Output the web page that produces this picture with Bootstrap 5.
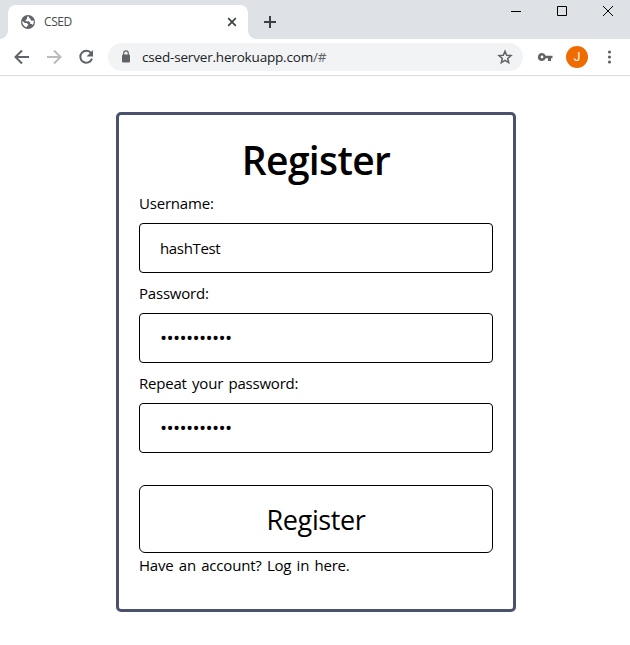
<!DOCTYPE html>
<html lang="en">
<head>
<meta charset="utf-8">
<meta name="viewport" content="width=device-width, initial-scale=1">
<title>CSED</title>
<link href="https://cdn.jsdelivr.net/npm/bootstrap@5.3.0/dist/css/bootstrap.min.css" rel="stylesheet">
<style>
body { font-family: "Segoe UI", "Open Sans", "Noto Sans", sans-serif; color: #000; background: #fff; height: 645px; overflow: hidden; }
.tab-strip { height: 39px; background: #dee1e6; padding-left: 8px; }
.browser-tab { width: 240px; height: 34px; margin-top: 5px; padding: 0 10px 0 12px; background: #fff; border-radius: 8px 8px 0 0; }
.browser-tab::before, .browser-tab::after { content: ""; position: absolute; bottom: 0; width: 8px; height: 8px; }
.browser-tab::before { left: -8px; background: radial-gradient(circle at 0 0, transparent 7.5px, #fff 8px); }
.browser-tab::after { right: -8px; background: radial-gradient(circle at 100% 0, transparent 7.5px, #fff 8px); }
.tab-title { font-size: 12px; line-height: 16px; color: #45494d; margin-left: 8px; letter-spacing: -.4px; }
.new-tab { margin: 16px 0 0 16px; }
.reload { margin-left: 14px; }
.toolbar { height: 37px; border-bottom: 1px solid #dadce0; padding: 0 12px 0 13px; }
.address { width: 415px; height: 28px; background: #f1f3f4; margin-left: 13px; padding: 0 10px; }
.url { font-size: 13.5px; line-height: 20px; color: #202124; margin-left: 8px; letter-spacing: -.18px; }
.url-rest { color: #5f6368; }
.key { margin-left: 14px; }
.avatar { width: 22px; height: 22px; background: #ef6c00; color: #fff; font: 12px/22px Roboto, sans-serif; margin-left: 12px; }
.page { padding: 36px 0 0 2px; }
.register-box { width: 400px; height: 500px; border: 3px solid #4a536b; border-radius: 5px; padding: 20px; }
.register-title { font-size: 39px; line-height: 46px; padding-top: 2px; font-weight: 600; letter-spacing: -.65px; }
.register-box .form-label, .login-link { font-size: 15px; line-height: 24px; letter-spacing: -.2px; word-spacing: 1.6px; }
.register-box .form-control { height: 50px; border: 1px solid #000; border-radius: 4px; padding: 0 20px; color: #000; font-size: 15px; letter-spacing: -.35px; }
.register-box .form-control.secret { font-size: 19px; letter-spacing: -.65px; }
.register-btn { height: 68px; margin-top: 32px; padding: 8px 0 6px; border: 1px solid #000; border-radius: 6px; color: #000; font-size: 27px; line-height: 42px; letter-spacing: -.4px; }
</style>
</head>
<body>
<header>
  <div class="tab-strip d-flex">
    <div class="browser-tab position-relative d-flex align-items-center">
      <svg width="16" height="16" viewBox="0 0 16 16"><circle cx="8" cy="8" r="7" fill="#5f6368"/><path d="M8.200 1.800 7 3.500v1.500L5.600 6v1.300h3.200l1.400 1.200v1.500h1.500l1 1c1.200-1.600 1.300-3.200.9-4.500l-2 .2-1.200-1V4.300H9.200L8.700 3zM2.300 6.900c-.4 2.700 1.700 5.900 4.700 6.200v-1.300h1.200v-1.300L6.800 9.100H5z" fill="#fff"/></svg>
      <span class="tab-title">CSED</span>
      <svg class="ms-auto" width="12" height="12" viewBox="0 0 12 12" stroke="#3c4043" stroke-width="1.700"><path d="m2.200 2.200 7.600 7.600M9.800 2.200 2.200 9.800"/></svg>
    </div>
    <svg class="new-tab" width="12" height="12" viewBox="0 0 12 12" stroke="#3c4043" stroke-width="2"><path d="M6 0v12M0 6h12"/></svg>
    <div class="ms-auto d-flex">
      <svg width="120" height="24" viewBox="0 0 120 24" fill="none" stroke="#000"><path d="M1 11.500h10M47.500 6.500h9v9h-9zM93 6l10 10M103 6 93 16"/></svg>
    </div>
  </div>
  <div class="toolbar d-flex align-items-center">
    <svg width="18" height="18" viewBox="0 0 18 18" fill="none" stroke="#5f6368" stroke-width="2"><path d="M16 9H3M9 2.500 2.500 9 9 15.500"/></svg>
    <svg class="ms-3" width="16" height="18" viewBox="0 0 16 18" fill="none" stroke="#babcbe" stroke-width="2"><path d="M0 9h13M7 2.500 13.500 9 7 15.500"/></svg>
    <svg class="reload" width="18" height="18" viewBox="0 0 18 18"><path d="M14.200 5.200A6 6 0 1 0 15 10.700" fill="none" stroke="#5f6368" stroke-width="2"/><path d="M16 2v6.500H9.500z" fill="#5f6368"/></svg>
    <div class="address rounded-pill d-flex align-items-center">
      <svg width="16" height="16" viewBox="0 0 16 16"><rect x="4" y="5.500" width="8" height="8" rx="1" fill="#5f6368"/><path d="M5.700 6V4.200a2.300 2.300 0 0 1 4.600 0V6" fill="none" stroke="#5f6368" stroke-width="1.200"/></svg>
      <span class="url">csed-server.herokuapp.com<span class="url-rest">/#</span></span>
      <svg class="ms-auto" width="16" height="16" viewBox="0 0 16 16" fill="none" stroke="#5f6368" stroke-width="1.500"><path d="m8 2.200 1.700 4 4.300.4-3.300 2.800 1 4.200L8 11.400l-3.700 2.200 1-4.200L2 6.600l4.300-.4z"/></svg>
    </div>
    <svg class="key" width="17" height="16" viewBox="0 0 17 16"><path fill="#5f6368" fill-rule="evenodd" d="M5 4a4 4 0 1 0 3.700 5.300H11V12h3V9.300h1.500V6.700H8.700A4 4 0 0 0 5 4zm0 2.600a1.400 1.400 0 1 1 0 2.800 1.400 1.400 0 0 1 0-2.800z"/></svg>
    <span class="avatar rounded-circle text-center">J</span>
    <svg class="ms-auto me-1" width="8" height="16" viewBox="0 0 8 16" fill="#5f6368"><circle cx="3.500" cy="3" r="1.600"/><circle cx="3.500" cy="8" r="1.600"/><circle cx="3.500" cy="13" r="1.600"/></svg>
  </div>
</header>
<main class="page d-flex justify-content-center">
  <form class="register-box">
    <h1 class="register-title text-center mb-2">Register</h1>
    <label class="form-label d-block mb-2" for="user">Username:</label>
    <input class="form-control mb-2" id="user" type="text" value="hashTest">
    <label class="form-label d-block mb-2" for="pass">Password:</label>
    <input class="form-control secret mb-2" id="pass" type="password" value="hashTest123">
    <label class="form-label d-block mb-2" for="repeat">Repeat your password:</label>
    <input class="form-control secret" id="repeat" type="password" value="hashTest123">
    <button class="btn register-btn w-100" type="button">Register</button>
    <a class="login-link d-block text-reset text-decoration-none" href="#">Have an account? Log in here.</a>
  </form>
</main>
<script src="https://cdn.jsdelivr.net/npm/bootstrap@5.3.0/dist/js/bootstrap.bundle.min.js"></script>
</body>
</html>
